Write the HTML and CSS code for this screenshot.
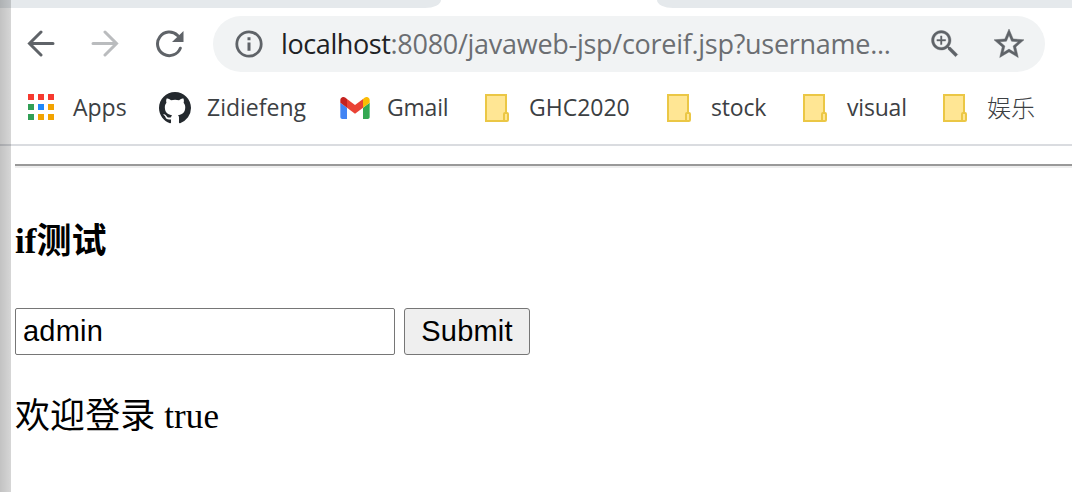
FILE: index.html
```html
<!DOCTYPE html>
<html lang="zh-CN">
<head>
<meta charset="utf-8">
<title>if测试</title>
<link rel="stylesheet" href="styles.css">
</head>
<body>
<svg width="0" height="0" class="defs"><defs>
<symbol id="folder" viewBox="0 0 24 28"><path d="M1 1h20v18h2v8H1z" fill="#ffe694"/><path d="M21 18V1H1v26h20.500M19 27v-7q0-1 1-1h2q1 0 1 1v6q0 1-1 1z" fill="none" stroke="#ebc745" stroke-width="2"/></symbol>
</defs></svg>
<header class="browser">
  <div class="tabs"><div class="tab-left"></div><div class="tab-right"></div></div>
  <nav class="toolbar">
    <svg class="arrow" viewBox="0 0 28 28"><path d="M26 14.500H3M14 3L2.500 14.500 14 26" fill="none" stroke="#5f6368" stroke-width="3" stroke-linecap="round"/></svg>
    <svg class="arrow forward" viewBox="0 0 28 28"><path d="M2 14.500h23M14 3l11.500 11.500L14 26" fill="none" stroke="#babcbe" stroke-width="3" stroke-linecap="round"/></svg>
    <svg class="reload" viewBox="0 0 28 28"><path d="M24.300 18.200A11.800 11.800 0 1 1 21.500 5.300" fill="none" stroke="#5f6368" stroke-width="3" stroke-linecap="round"/><path d="M27.500 1v11H16z" fill="#5f6368"/></svg>
    <div class="omnibox">
      <svg class="info" viewBox="0 0 28 28"><circle cx="14" cy="14" r="12.200" fill="none" stroke="#5f6368" stroke-width="2.800"/><path d="M12.500 7.200h3v3h-3zM12.500 12.400h3v8.400h-3z" fill="#5f6368"/></svg>
      <div class="url"><span class="host">localhost</span><span class="path">:8080/javaweb-jsp/coreif.jsp?username...</span></div>
      <svg class="zoom" viewBox="0 0 24 24"><path fill="#5f6368" stroke="#5f6368" stroke-width=".25" d="M15.500 14h-.79l-.28-.27C15.410 12.590 16 11.110 16 9.500 16 5.910 13.090 3 9.500 3S3 5.910 3 9.500 5.910 16 9.500 16c1.610 0 3.090-.59 4.230-1.570l.27.28v.79l5 4.990L20.490 19l-4.990-5zm-6 .3C6.850 14.300 4.700 12.150 4.700 9.500S6.850 4.700 9.500 4.700s4.800 2.150 4.800 4.800-2.150 4.800-4.800 4.800zM12.400 10h-2.400v2.400H9V10H6.600V9H9V6.600h1V9h2.400z"/></svg>
      <svg class="star" viewBox="0 0 24 24"><path fill="#5f6368" stroke="#5f6368" stroke-width=".3" d="M22 9.240l-7.190-.62L12 2 9.190 8.630 2 9.240l5.460 4.730L5.820 21 12 17.270 18.180 21l-1.630-7.030L22 9.240zM12 15.400l-3.760 2.270 1-4.280-3.320-2.880 4.380-.38L12 6.100l1.710 4.040 4.380.38-3.320 2.880 1 4.280L12 15.400z"/></svg>
    </div>
  </nav>
  <nav class="bookmarks">
    <a class="item apps"><svg class="icon" viewBox="0 0 26 26"><path fill="#f6392f" d="M0 0h6v6H0zM10 0h6v6h-6zM20 0h6v6h-6z"/><path fill="#319f56" d="M0 10h6v6H0zM0 20h6v6H0z"/><path fill="#1e88fb" d="M10 10h6v6h-6z"/><path fill="#f2a300" d="M20 10h6v6h-6zM10 20h6v6h-6zM20 20h6v6h-6z"/></svg><span class="label">Apps</span></a>
    <a class="item github"><svg class="icon" viewBox="0 0 16 16"><path fill="#24292e" d="M8 0C3.580 0 0 3.580 0 8c0 3.540 2.290 6.530 5.470 7.590.4.070.55-.17.55-.38 0-.19-.01-.82-.01-1.490-2.010.37-2.530-.49-2.690-.94-.09-.23-.48-.94-.82-1.130-.28-.15-.68-.52-.01-.53.63-.01 1.080.58 1.230.82.72 1.210 1.870.87 2.330.66.07-.52.28-.87.51-1.070-1.780-.2-3.640-.89-3.640-3.950 0-.87.31-1.590.82-2.150-.08-.2-.36-1.020.08-2.120 0 0 .67-.21 2.200.82.64-.18 1.320-.27 2-.27s1.360.09 2 .27c1.530-1.040 2.200-.82 2.200-.82.44 1.100.16 1.920.08 2.120.51.56.82 1.270.82 2.150 0 3.070-1.870 3.750-3.650 3.950.29.25.54.73.54 1.480 0 1.070-.01 1.930-.01 2.200 0 .21.15.46.55.38A8.010 8.010 0 0 0 16 8c0-4.420-3.580-8-8-8z"/></svg><span class="label">Zidiefeng</span></a>
    <a class="item gmail"><svg class="icon" viewBox="52 42 88 66"><path fill="#4285f4" d="M58 108h14V74L52 59v43c0 3.320 2.690 6 6 6"/><path fill="#34a853" d="M120 108h14c3.320 0 6-2.690 6-6V59l-20 15"/><path fill="#fbbc04" d="M120 48v26l20-15v-8c0-7.420-8.470-11.650-14.400-7.200"/><path fill="#ea4335" d="M72 74V48l24 18 24-18v26L96 92"/><path fill="#c5221f" d="M52 51v8l20 15V48l-5.600-4.200c-5.940-4.450-14.400-.22-14.400 7.200"/></svg><span class="label">Gmail</span></a>
    <a class="item ghc"><svg class="icon"><use href="#folder"/></svg><span class="label">GHC2020</span></a>
    <a class="item stock"><svg class="icon"><use href="#folder"/></svg><span class="label">stock</span></a>
    <a class="item visual"><svg class="icon"><use href="#folder"/></svg><span class="label">visual</span></a>
    <a class="item fun"><svg class="icon"><use href="#folder"/></svg><span class="label">娱乐</span></a>
  </nav>
</header>
<main class="page">
  <hr class="rule">
  <h4 class="title">if测试</h4>
  <form class="login"><input class="name" type="text" value="admin"><button class="submit" type="button">Submit</button></form>
  <p class="welcome">欢迎登录 true</p>
</main>
<div class="edge"></div>
</body>
</html>
```
FILE: styles.css
```css
* { box-sizing: border-box; }
body { margin: 0; height: 492px; overflow: hidden; background: #fff; position: relative; }
svg { display: block; flex: none; }
.defs { position: absolute; }
.browser { height: 146px; border-bottom: 2px solid #dadce0; font-family: "Open Sans", "Noto Sans CJK SC", sans-serif; }
.tabs { height: 8px; display: flex; justify-content: space-between; }
.tab-left { width: 441px; background: #e5e9ec; border-bottom-right-radius: 16px 8px; }
.tab-right { width: 415px; background: #e5e9ec; border-bottom-left-radius: 16px 8px; }
.toolbar { height: 72px; display: flex; align-items: center; padding: 0 27px; }
.arrow { width: 28px; height: 28px; margin-bottom: 2px; }
.forward { margin-left: 36px; }
.reload { width: 28px; height: 28px; margin-left: 37px; }
.omnibox { width: 832px; height: 56px; margin-left: 29px; border-radius: 28px; background: #f1f3f4; display: flex; align-items: center; flex: none; }
.info { width: 28px; height: 28px; margin-left: 22px; }
.url { width: 646px; margin-left: 18px; font-size: 27px; line-height: 40px; white-space: nowrap; }
.host { color: #202124; letter-spacing: -0.4px; }
.path { color: #6b6e72; letter-spacing: -0.28px; }
.zoom { width: 36px; height: 36px; }
.star { width: 36px; height: 36px; margin-left: 28px; }
.bookmarks { height: 56px; display: flex; padding-left: 27px; }
.item { display: flex; align-items: center; color: #3c4043; font-size: 23px; line-height: 34px; white-space: nowrap; flex: none; }
.label { padding-bottom: 2px; }
.apps { width: 132px; }
.apps .icon { width: 26px; height: 26px; margin: 0 19px 2px 1px; }
.github { width: 181px; }
.github .icon { width: 32px; height: 32px; margin-right: 16px; }
.gmail { width: 145px; }
.gmail .icon { width: 30px; height: 22px; margin-right: 17px; }
.gmail .label, .stock .label, .visual .label { letter-spacing: -0.2px; }
.ghc { width: 182px; }
.stock { width: 136px; }
.visual { width: 140px; }
.ghc .icon, .stock .icon, .visual .icon, .fun .icon { width: 24px; height: 28px; margin-right: 20px; }
.fun .label { font-family: "Noto Sans CJK SC", sans-serif; font-size: 24px; font-weight: 300; padding-bottom: 3px; }
.page { padding-left: 15px; font-family: "Liberation Serif", "Noto Sans CJK SC", serif; color: #000; }
.rule { height: 4px; margin: 18px 0 0; border: 0; border-top: 2px solid #999; border-bottom: 2px solid #eee; }
.title { margin: 50px 0 0; font-size: 35px; line-height: 48px; font-weight: 700; }
.login { display: flex; margin-top: 42px; }
.name { width: 380px; height: 47px; padding: 0 7px; border: 1px solid #767676; border-radius: 2px; background: #fff; font: 29px "Liberation Sans", sans-serif; letter-spacing: 0.2px; color: #000; }
.submit { width: 126px; height: 47px; margin-left: 9px; padding: 0; border: 1px solid #767676; border-radius: 3px; background: #efefef; color: #000; font: 29px "Liberation Sans", sans-serif; letter-spacing: 0.2px; }
.welcome { margin: 38px 0 0; font-size: 35px; line-height: 48px; letter-spacing: 0.1px; }
.edge { position: absolute; left: 0; top: 0; width: 11px; height: 492px; background: linear-gradient(to right, rgba(0, 0, 0, .24), rgba(0, 0, 0, .16)); }
```
